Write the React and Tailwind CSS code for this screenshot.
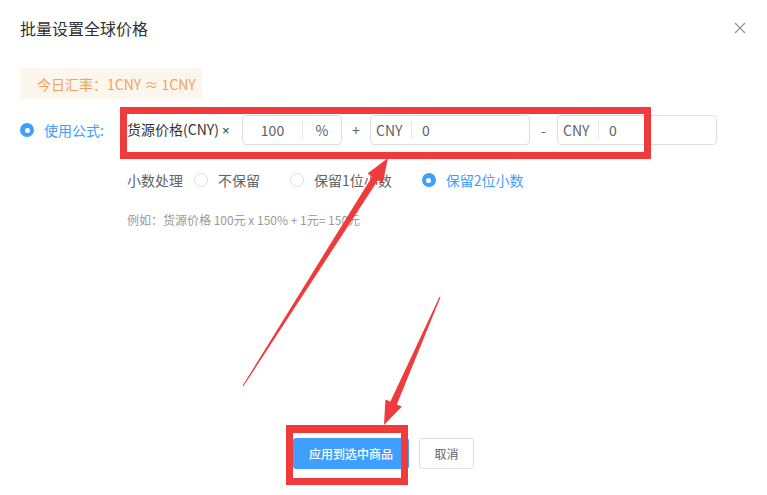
import React from "react";

function Radio({ checked }) {
  return checked ? (
    <span className="flex h-[14px] w-[14px] shrink-0 items-center justify-center rounded-full bg-[#409eff]">
      <span className="block h-[5px] w-[5px] rounded-full bg-white" />
    </span>
  ) : (
    <span className="block h-[14px] w-[14px] shrink-0 rounded-full border border-[#dcdfe6] bg-white" />
  );
}

export default function App() {
  return (
    <div className="relative h-[495px] w-[767px] overflow-hidden bg-white font-['Noto_Sans_CJK_SC','Noto_Sans',sans-serif] text-[#333]">
      {/* header */}
      <div className="flex items-center justify-between pl-5 pr-[21px] pt-[18px]">
        <div className="text-[16px] leading-[20px] text-[#303133]">批量设置全球价格</div>
        <svg width="12" height="12" viewBox="0 0 12 12" className="text-[#909399]">
          <path d="M1 1L11 11M11 1L1 11" stroke="currentColor" strokeWidth="1.2" />
        </svg>
      </div>

      {/* exchange rate */}
      <div className="ml-5 mt-[30px] flex h-[31px] w-[182px] items-center bg-[#fdf6ec] pl-[17px] text-[14px] leading-[20px] text-[#efa35f]">
        今日汇率：1CNY ≈ 1CNY
      </div>

      {/* formula row */}
      <div className="mt-4 flex h-[30px] items-center pl-5 text-[14px] leading-[20px]">
        <Radio checked />
        <span className="ml-[10px] w-[83px] text-[#409eff]">使用公式:</span>
        <span className="w-[115px] text-[#333]">
          货源价格(CNY) <span className="font-['Liberation_Sans',sans-serif] text-[13px]">×</span>
        </span>
        <div className="flex h-[30px] w-[100px] items-center rounded-[4px] border border-[#dcdfe6] text-[#606266]">
          <span className="w-[59px] text-center">100</span>
          <span className="h-[18px] w-px bg-[#e4e7ed]" />
          <span className="flex-1 text-center">%</span>
        </div>
        <span className="w-[28px] text-center text-[#606266]">+</span>
        <div className="flex h-[30px] w-[160px] items-center rounded-[4px] border border-[#dcdfe6] text-[#606266]">
          <span className="w-[40px] pl-[5px]">CNY</span>
          <span className="h-[18px] w-px bg-[#e4e7ed]" />
          <span className="pl-[10px]">0</span>
        </div>
        <span className="w-[27px] text-center text-[#606266]">-</span>
        <div className="flex h-[30px] w-[160px] items-center rounded-[4px] border border-[#dcdfe6] text-[#606266]">
          <span className="w-[40px] pl-[5px]">CNY</span>
          <span className="h-[18px] w-px bg-[#e4e7ed]" />
          <span className="pl-[10px]">0</span>
        </div>
      </div>

      {/* decimal row */}
      <div className="mt-[25px] flex h-[20px] items-center pl-[127px] text-[14px] leading-[20px] text-[#606266]">
        <span>小数处理</span>
        <span className="ml-[11px]"><Radio /></span>
        <span className="ml-[10px]">不保留</span>
        <span className="ml-[30px]"><Radio /></span>
        <span className="ml-[10px]">保留1位小数</span>
        <span className="ml-[30px]"><Radio checked /></span>
        <span className="ml-[10px] text-[#409eff]">保留2位小数</span>
      </div>

      {/* example */}
      <div className="mt-[21px] h-[17px] pl-[127px] text-[12px] leading-[17px] text-[#999]">
        例如：货源价格 100元 x 150% + 1元= 150元
      </div>

      {/* buttons */}
      <div className="mt-[210px] flex justify-center gap-[10px]">
        <button className="h-[31px] w-[116px] rounded-[3px] bg-[#409eff] text-[12px] font-medium text-white">
          应用到选中商品
        </button>
        <button className="h-[31px] w-[55px] rounded-[3px] border border-[#dcdfe6] bg-white text-[12px] text-[#606266]">
          取消
        </button>
      </div>

      {/* annotations */}
      <div className="pointer-events-none absolute left-[120px] top-[107px] h-[52px] w-[531px] border-[7px] border-[#ef3b3b]" />
      <div className="pointer-events-none absolute left-[286px] top-[425px] h-[60px] w-[122px] border-[7px] border-t-[8px] border-[#ef3b3b]" />
      <svg className="pointer-events-none absolute left-0 top-0" width="767" height="495" viewBox="0 0 767 495">
        <polygon
          fill="#ef3b3b"
          points="243.4,386.3 378.1,180.1 382.7,183.1 388,158 367.5,173.4 372.2,176.4 242.6,385.7"
        />
        <polygon
          fill="#ef3b3b"
          points="440.5,297.2 396.8,404.4 401.9,406.6 384,425 385.4,399.4 390.4,401.6 439.5,296.8"
        />
      </svg>
    </div>
  );
}
